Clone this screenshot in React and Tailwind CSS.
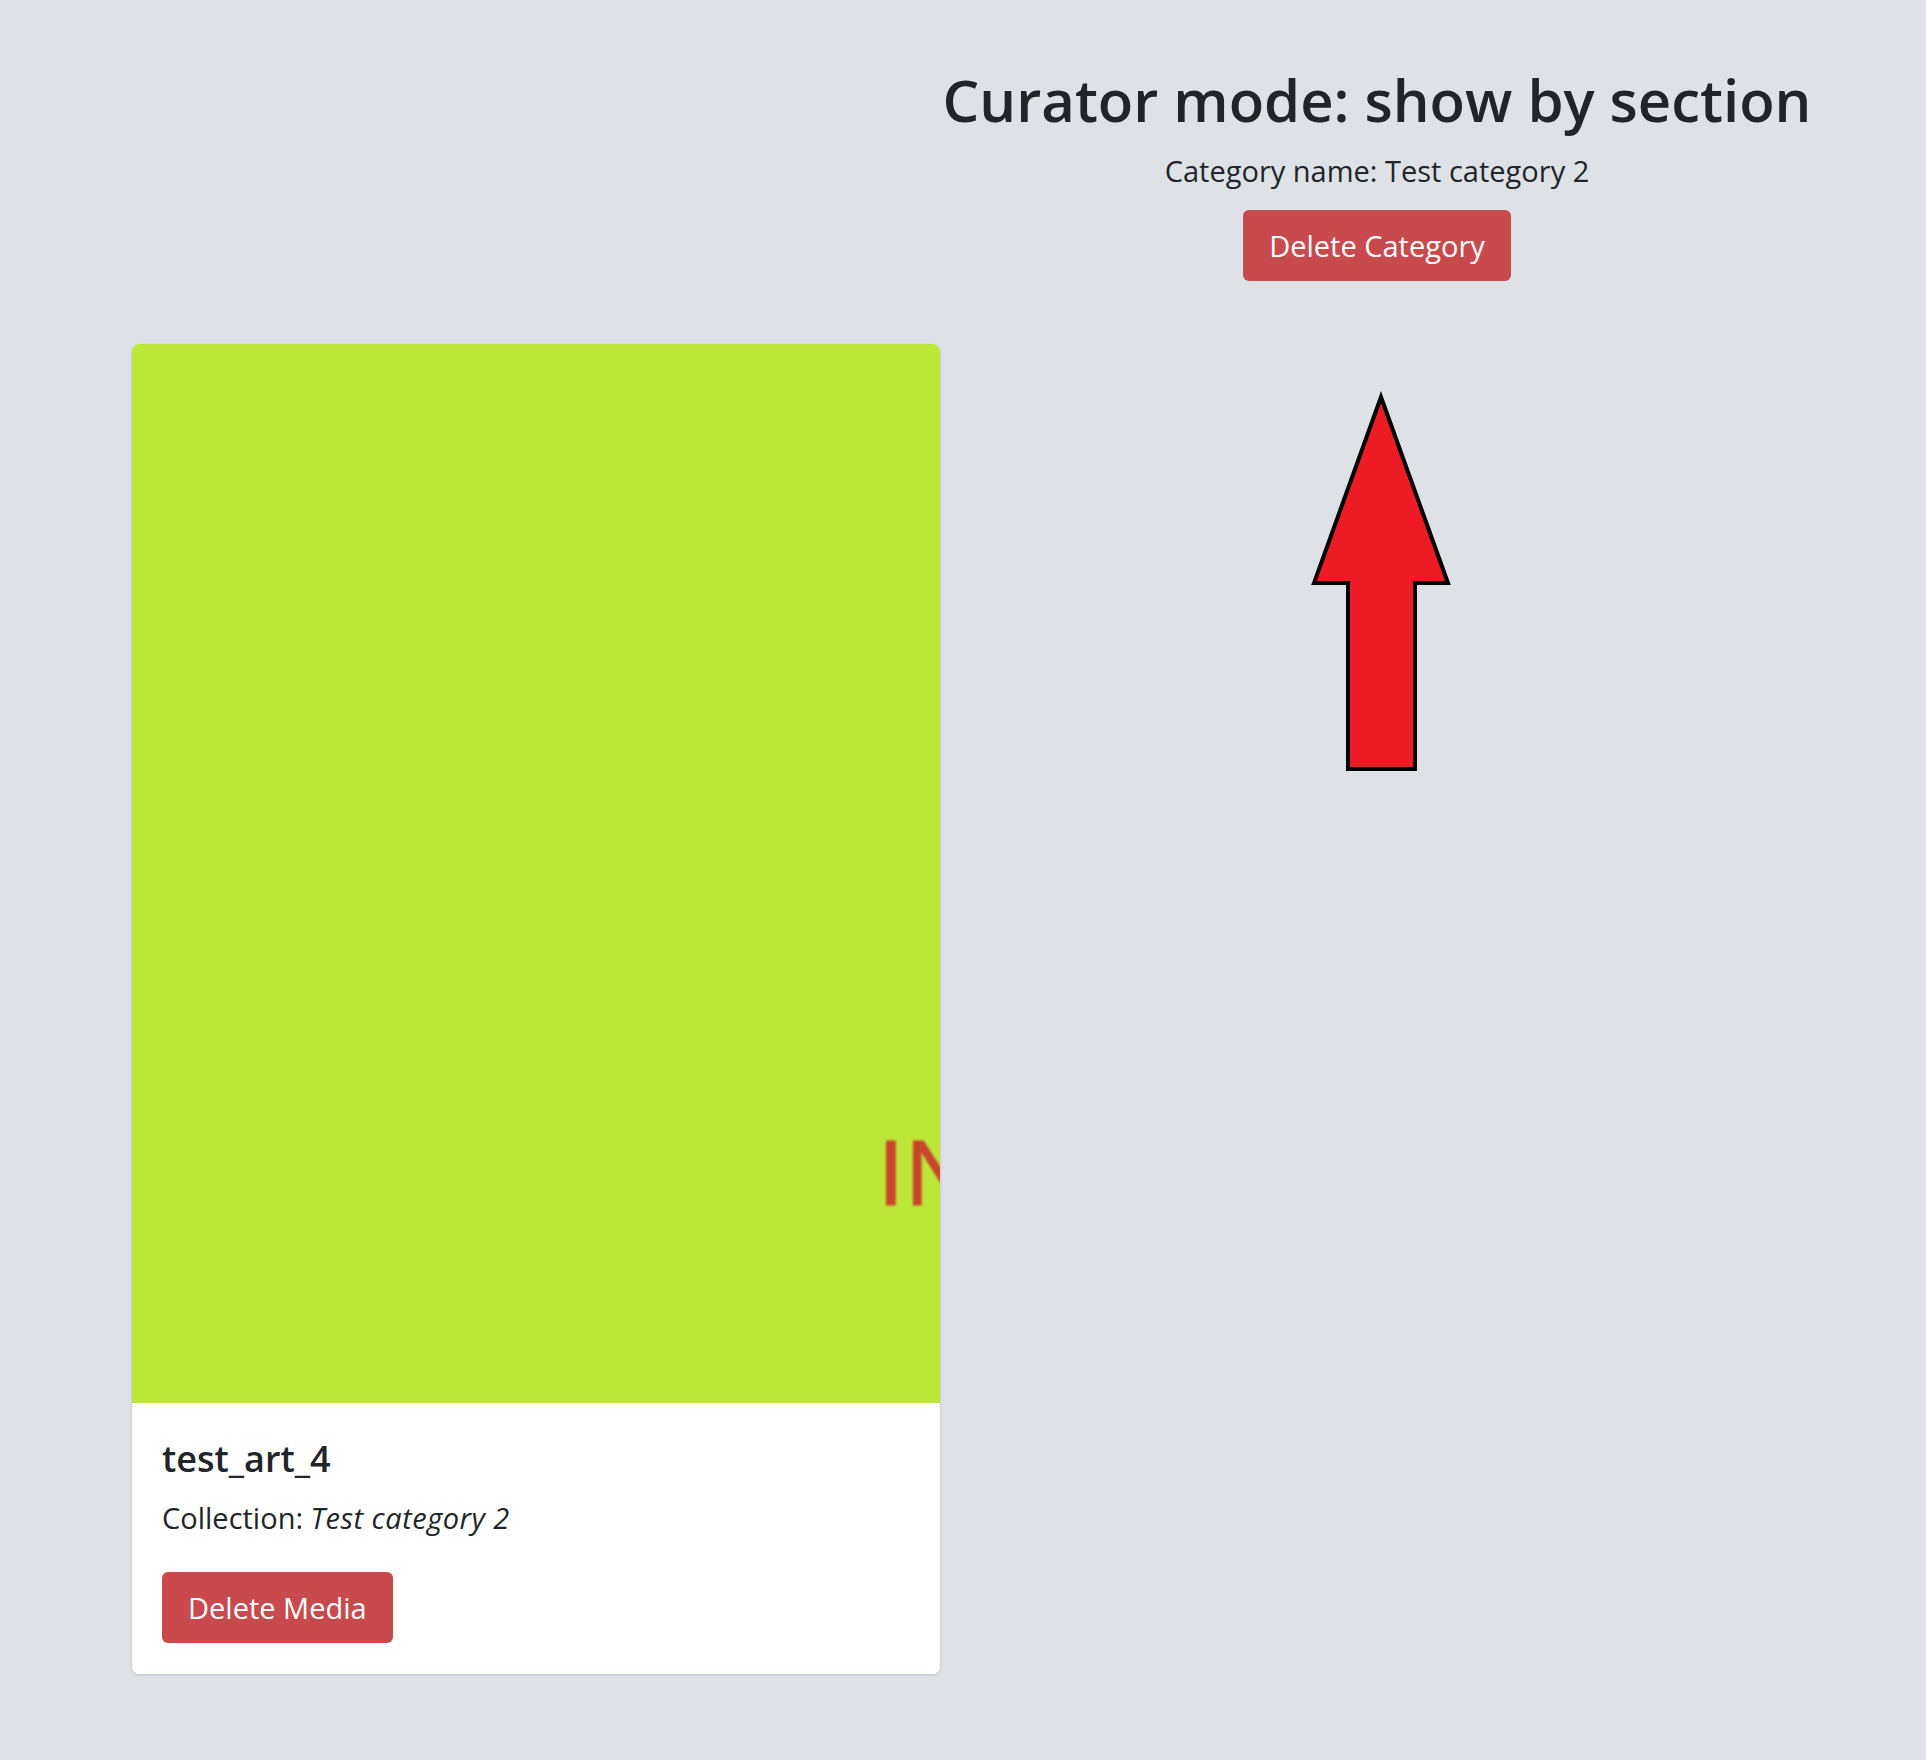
export default function App() {
  return (
    <div className="relative min-h-[1760px] w-full bg-[#dee2e6] text-[#212529] font-['Open_Sans','Noto_Sans',sans-serif]">
      <div className="grid grid-cols-[828px_1fr] pt-[65px]">
        <div />
        <div className="flex flex-col items-center">
          <h1 className="text-[58px] leading-[70px] font-semibold">Curator mode: show by section</h1>
          <p className="mt-[14px] text-[29px] leading-[44px]">Category name: Test category 2</p>
          <button className="mt-[17px] flex h-[71px] items-center rounded-[6px] bg-[#c84a4d] px-[26px] text-[29px] text-white">Delete Category</button>
        </div>
      </div>

      <div className="pl-[132px] pt-[63px]">
        <div className="w-[808px] rounded-[7px] bg-white shadow-[0_1px_3px_rgba(0,0,0,0.15)]">
          <div className="relative h-[1059px] overflow-hidden rounded-t-[7px] bg-[#bce739]">
            <span className="absolute left-[746px] top-[783px] whitespace-nowrap font-['Liberation_Sans',sans-serif] text-[93px] leading-none tracking-[2px] text-[#c8452c] blur-[0.8px] [-webkit-text-stroke:1px_#c8452c]">INVALID</span>
          </div>
          <div className="px-[30px] pt-[34px] pb-[31px]">
            <h5 className="text-[36px] leading-[43px] font-semibold">test_art_4</h5>
            <p className="mt-[16px] text-[29px] leading-[44px]">
              Collection: <em className="italic tracking-[0.5px]">Test category 2</em>
            </p>
            <button className="mt-[32px] flex h-[71px] items-center rounded-[6px] bg-[#c84a4d] px-[26px] text-[29px] text-white">Delete Media</button>
          </div>
        </div>
      </div>

      <svg className="absolute left-[1300px] top-[380px]" width="170" height="400" viewBox="0 0 170 400">
        <polygon
          points="81,17 148,203 115,203 115,389 48,389 48,203 14,203"
          fill="#ed1c24"
          stroke="#000"
          strokeWidth="4"
          strokeLinejoin="miter"
        />
      </svg>
    </div>
  );
}
